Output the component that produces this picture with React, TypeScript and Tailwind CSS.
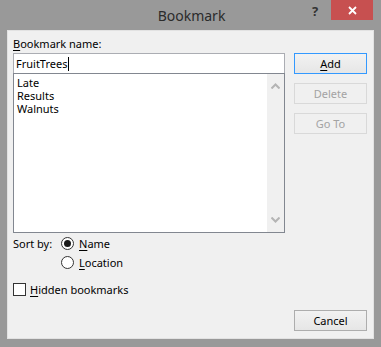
import React from "react";

const U = ({ children }: { children: React.ReactNode }) => (
  <span className="underline underline-offset-[2px] decoration-1">{children}</span>
);

const Radio = ({ checked }: { checked?: boolean }) => (
  <span className="w-[13px] h-[13px] rounded-full border border-[#333] bg-white flex items-center justify-center">
    {checked && <span className="w-[7px] h-[7px] rounded-full bg-[#1a1a1a]" />}
  </span>
);

const Btn = ({
  children,
  variant = "normal",
  className = "",
}: {
  children: React.ReactNode;
  variant?: "default" | "normal" | "disabled";
  className?: string;
}) => {
  const styles = {
    default: "border-[#3399ff] bg-gradient-to-b from-[#f2f2f2] to-[#e6e6e6] text-black",
    normal: "border-[#adadad] bg-gradient-to-b from-[#f2f2f2] to-[#e6e6e6] text-black",
    disabled: "border-[#d9d9d9] bg-[#f0f0f0] text-[#a3a3a3]",
  }[variant];
  return (
    <div className={`w-[73px] h-[21px] border flex items-center justify-center leading-[15px] ${styles} ${className}`}>
      {children}
    </div>
  );
};

const Chevron = ({ up }: { up?: boolean }) => (
  <svg width="9" height="6" viewBox="0 0 9 6" className="block">
    <path
      d={up ? "M0.5 5.5 L4.5 1.5 L8.5 5.5" : "M0.5 0.5 L4.5 4.5 L8.5 0.5"}
      stroke="#b4b4b4"
      strokeWidth="2"
      fill="none"
    />
  </svg>
);

const App = () => {
  const items = ["Late", "Results", "Walnuts"];

  return (
    <div
      className="w-[381px] h-[347px] bg-[#999999] flex flex-col text-[11px] text-black"
      style={{ fontFamily: '"Noto Sans", "Open Sans", sans-serif' }}
    >
      {/* Title bar */}
      <div className="h-[30px] flex shrink-0 relative">
        <div className="flex-1 flex items-center justify-center pl-[2px] pt-[1px] text-[14px] text-[#2b2b2b]">
          Bookmark
        </div>
        <div className="absolute left-[312px] top-[2px] text-[13px] font-bold text-[#333]">?</div>
        <div className="absolute left-[331px] top-0 w-[42px] h-[20px] bg-[#c75050] flex items-center justify-center">
          <svg width="9" height="9" viewBox="0 0 9 9">
            <path d="M1 1 L8 8 M8 1 L1 8" stroke="#fff" strokeWidth="1.8" />
          </svg>
        </div>
      </div>

      {/* Content panel */}
      <div className="mx-[7px] h-[309px] border border-[#e2e2e2] bg-[#f0f0f0] flex">
        {/* Left column */}
        <div className="w-[277px] pl-[5px] flex flex-col">
          <div className="h-[22px] pt-[5px] leading-[15px]">
            <U>B</U>ookmark name:
          </div>
          <div className="h-[20px] border border-b-0 border-[#abadb3] bg-white flex items-center pl-[2px] leading-[15px]">
            FruitTrees
            <span className="w-px h-[14px] bg-black ml-px" />
          </div>
          <div className="h-[160px] border border-[#828790] bg-white flex">
            <div className="flex-1 pl-[3px] pt-[2px] leading-[13px]">
              {items.map((it) => (
                <div key={it}>{it}</div>
              ))}
            </div>
            <div className="w-[17px] bg-[#f0f0f0] flex flex-col items-center justify-between pt-[9px] pb-[9px]">
              <Chevron up />
              <Chevron />
            </div>
          </div>
          <div className="flex mt-[1px]">
            <div className="h-[19px] flex items-center w-[48px] leading-[15px]">Sort by:</div>
            <div className="flex flex-col">
              <div className="h-[19px] flex items-center gap-[5px] leading-[15px]">
                <Radio checked />
                <span>
                  <U>N</U>ame
                </span>
              </div>
              <div className="h-[19px] flex items-center gap-[5px] leading-[15px]">
                <Radio />
                <span>
                  <U>L</U>ocation
                </span>
              </div>
            </div>
          </div>
          <div className="h-[19px] mt-[8px] flex items-center gap-[4px] leading-[15px]">
            <span className="w-[13px] h-[13px] border border-[#333] bg-white" />
            <span>
              <U>H</U>idden bookmarks
            </span>
          </div>
        </div>

        {/* Right column */}
        <div className="flex-1 pl-[9px] pt-[22px] pb-[7px] flex flex-col gap-[9px]">
          <Btn variant="default">
            <span>
              <U>A</U>dd
            </span>
          </Btn>
          <Btn variant="disabled">Delete</Btn>
          <Btn variant="disabled">Go To</Btn>
          <Btn className="mt-auto">Cancel</Btn>
        </div>
      </div>
    </div>
  );
};

export default App;
